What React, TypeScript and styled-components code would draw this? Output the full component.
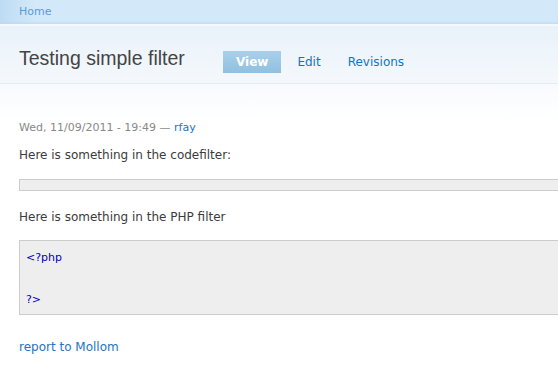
import React from 'react'
import styled, { createGlobalStyle } from 'styled-components'

const Global = createGlobalStyle`
  html, body { margin: 0; padding: 0; background: #fff; overflow: hidden; }
  body { font-family: "DejaVu Sans", Verdana, sans-serif; font-size: 12px; color: #3b3b3b; }
`

const Page = styled.div`
  width: 558px;
  height: 373px;
  overflow: hidden;
  background: #fff;
`

const TopBar = styled.div`
  height: 24px;
  display: flex;
  align-items: center;
  padding-left: 19px;
  background: linear-gradient(90deg, #bcdcf5 0px, #d3e8f8 34px, #d3e8f8 100%);
  border-bottom: 2px solid #f4f9fd;
  box-shadow: inset 0 -3px 3px -2px #bcd8f0;
`

const Crumb = styled.a`
  font-size: 11px;
  color: #5b9bd9;
  text-decoration: none;
  margin-top: -1px;
`

const Header = styled.div`
  height: 58px;
  display: flex;
  align-items: flex-start;
  padding: 20px 0 0 19px;
  box-sizing: border-box;
  background: linear-gradient(#e9f2fa, #f4f8fc);
  border-bottom: 1px solid #e4ebf2;
`

const Title = styled.h1`
  margin: 0;
  font-family: "Liberation Sans", Arial, sans-serif;
  font-weight: normal;
  font-size: 19.5px;
  line-height: 24px;
  color: #444;
  width: 204px;
`

const Tabs = styled.nav`
  display: flex;
  align-items: center;
  gap: 16px;
  margin-top: 5px;
`

const Tab = styled.a<{ $active?: boolean }>`
  height: 22px;
  display: flex;
  align-items: center;
  padding: ${p => (p.$active ? '0 13px' : '0')};
  font-size: 12px;
  text-decoration: none;
  font-weight: ${p => (p.$active ? 'bold' : 'normal')};
  color: ${p => (p.$active ? '#fff' : '#0f74c8')};
  background: ${p => (p.$active ? 'linear-gradient(#a8d0ea, #90c0e0)' : 'none')};
  &:last-child { margin-left: 11px; }
`

const Content = styled.div`
  padding: 37px 0 0 19px;
  background: linear-gradient(#f8fbfe, #ffffff 40px);
`

const Meta = styled.div`
  font-size: 11px;
  color: #888;
  line-height: 14px;
`

const Author = styled.a`
  color: #2474c2;
  text-decoration: none;
`

const Para = styled.p<{ $gap: number }>`
  margin: ${p => p.$gap}px 0 0;
  line-height: 18px;
`

const CodeBox = styled.div<{ $gap: number }>`
  margin-top: ${p => p.$gap}px;
  width: 560px;
  background: #eee;
  border: 1px solid #ccc;
  border-right: none;
  box-sizing: border-box;
`

const EmptyCode = styled(CodeBox)`
  height: 12px;
`

const PhpCode = styled(CodeBox)`
  padding: 6px 6px;
  height: 75px;
  font-size: 11px;
  line-height: 21px;
  color: #0000bb;
`

const Report = styled.a`
  display: block;
  margin-top: 25px;
  color: #2474c2;
  text-decoration: none;
`

export default function App() {
  return (
    <Page>
      <Global />
      <TopBar>
        <Crumb href="#">Home</Crumb>
      </TopBar>
      <Header>
        <Title>Testing simple filter</Title>
        <Tabs>
          <Tab $active href="#">View</Tab>
          <Tab href="#">Edit</Tab>
          <Tab href="#">Revisions</Tab>
        </Tabs>
      </Header>
      <Content>
        <Meta>
          Wed, 11/09/2011 - 19:49 — <Author href="#">rfay</Author>
        </Meta>
        <Para $gap={11}>Here is something in the codefilter:</Para>
        <EmptyCode $gap={15} />
        <Para $gap={17}>Here is something in the PHP filter</Para>
        <PhpCode $gap={14}>
          <div>&lt;?php</div>
          <div>&nbsp;</div>
          <div>?&gt;</div>
        </PhpCode>
        <Report href="#">report to Mollom</Report>
      </Content>
    </Page>
  )
}
